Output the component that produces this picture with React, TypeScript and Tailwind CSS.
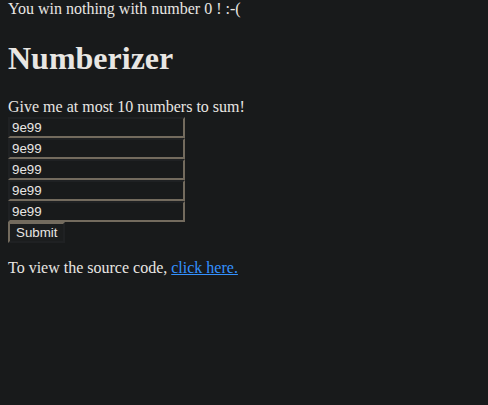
import React from 'react';

const values = ['9e99', '9e99', '9e99', '9e99', '9e99'];

export default function App() {
  return (
    <div
      className="min-h-[405px] bg-[#181a1b] px-2 text-[16px] leading-[1.15] text-[#e8e6e3]"
      style={{ fontFamily: '"Liberation Serif", "Times New Roman", serif' }}
    >
      <div>You win nothing with number 0 ! :-(</div>
      <h1 className="my-[21.44px] text-[32px] font-bold leading-[1.15]">Numberizer</h1>
      <div>Give me at most 10 numbers to sum!</div>
      <form className="mt-px flex flex-col items-start" onSubmit={(e) => e.preventDefault()}>
        {values.map((v, i) => (
          <input
            key={i}
            type="text"
            readOnly
            value={v}
            className="box-border h-[21px] w-[177px] border-2 border-t-[#1f2123] border-l-[#1f2123] border-b-[#736b5e] border-r-[#736b5e] bg-[#181a1b] px-[2px] py-[1px] text-[13.33px] leading-[15px] text-[#e8e6e3] outline-none"
            style={{ fontFamily: '"Liberation Sans", Arial, sans-serif' }}
          />
        ))}
        <button
          type="submit"
          className="box-border h-[21px] border-2 border-t-[#736b5e] border-l-[#736b5e] border-b-[#1f2123] border-r-[#1f2123] bg-[#1b1d1e] px-[6px] py-[1px] text-[13.33px] leading-[15px] text-[#e8e6e3]"
          style={{ fontFamily: '"Liberation Sans", Arial, sans-serif' }}
        >
          Submit
        </button>
      </form>
      <p className="my-4">
        To view the source code,{' '}
        <a href="#" className="text-[#3391ff] underline">
          click here.
        </a>
      </p>
    </div>
  );
}
